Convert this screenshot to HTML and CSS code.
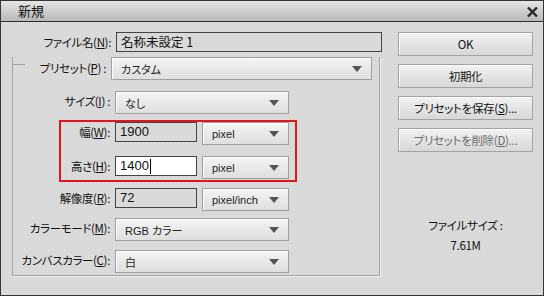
FILE: index.html
```html
<!DOCTYPE html>
<html lang="ja">
<head>
<meta charset="utf-8">
<title>新規</title>
<link rel="stylesheet" href="styles.css">
</head>
<body>
<div class="window">
  <div class="titlebar">
    <span class="title">新規</span>
    <svg class="close" width="11" height="10" viewBox="0 0 11 10"><path d="M1 0.5 L10 9.5 M10 0.5 L1 9.5" stroke="#2a2a2a" stroke-width="2.4"/></svg>
  </div>
  <div class="body">
    <div class="left">
      <div class="row file-row">
        <label class="lbl lbl-file">ファイル名(<u>N</u>):</label>
        <div class="field ro name">名称未設定 1</div>
      </div>
      <div class="group">
        <div class="preset-row">
          <span class="corner"></span>
          <label class="lbl lbl-preset">プリセット(<u>P</u>) :</label>
          <div class="select preset"><span class="val">カスタム</span><span class="arrow"></span></div>
        </div>
        <div class="row size-row">
          <label class="lbl">サイズ(<u>I</u>) :</label>
          <div class="select wide"><span class="val">なし</span><span class="arrow"></span></div>
        </div>
        <div class="highlight">
          <div class="row">
            <label class="lbl lbl-in">幅(<u>W</u>):</label>
            <div class="field ro num">1900</div>
            <div class="select unit"><span class="val">pixel</span><span class="arrow"></span></div>
          </div>
          <div class="row row-h">
            <label class="lbl lbl-in">高さ(<u>H</u>):</label>
            <div class="field edit num">1400<span class="caret"></span></div>
            <div class="select unit"><span class="val">pixel</span><span class="arrow"></span></div>
          </div>
        </div>
        <div class="row res-row">
          <label class="lbl">解像度(<u>R</u>):</label>
          <div class="field ro num">72</div>
          <div class="select unit"><span class="val">pixel/inch</span><span class="arrow"></span></div>
        </div>
        <div class="row mode-row">
          <label class="lbl">カラーモード(<u>M</u>):</label>
          <div class="select wide"><span class="val">RGB カラー</span><span class="arrow"></span></div>
        </div>
        <div class="row canvas-row">
          <label class="lbl">カンバスカラー(<u>C</u>):</label>
          <div class="select wide"><span class="val">白</span><span class="arrow"></span></div>
        </div>
      </div>
    </div>
    <div class="right">
      <div class="btn">OK</div>
      <div class="btn">初期化</div>
      <div class="btn">プリセットを保存(<u>S</u>)...</div>
      <div class="btn disabled">プリセットを削除(<u>D</u>)...</div>
      <div class="info">
        <div>ファイルサイズ :</div>
        <div>7.61M</div>
      </div>
    </div>
  </div>
</div>
</body>
</html>
```

FILE: styles.css
```css
* { box-sizing: border-box; }
html, body { margin: 0; padding: 0; }
body {
  width: 544px;
  height: 296px;
  font-family: "Noto Sans CJK JP", "Liberation Sans", sans-serif;
  font-feature-settings: "palt";
  font-size: 12px;
  color: #111;
}
u { text-decoration: underline; text-underline-offset: 1px; }

.window {
  width: 544px;
  height: 296px;
  border: 1px solid #353535;
  background-color: #d8d8d8;
  background-image:
    radial-gradient(circle, #e3e3e3 0.5px, transparent 0.8px),
    radial-gradient(circle, #e3e3e3 0.5px, transparent 0.8px);
  background-size: 4px 4px, 4px 4px;
  background-position: 0 0, 2px 2px;
  display: flex;
  flex-direction: column;
}

.titlebar {
  height: 21px;
  border-bottom: 1px solid #2e2e2e;
  background: linear-gradient(#e6e6e6, #c9c9c9 60%, #b9b9b9);
  display: flex;
  align-items: center;
  padding: 0 5px 0 17px;
}
.title { font-size: 13px; line-height: 20px; color: #111; }
.close { margin-left: auto; margin-top: 2px; }

.body {
  flex: 1;
  display: flex;
  padding: 10px 10px 0 0;
}
.left { width: 382px; }
.right {
  margin-left: 15px;
  width: 135px;
  display: flex;
  flex-direction: column;
  gap: 8px;
}

.row { display: flex; align-items: flex-start; }
.lbl {
  text-align: right;
  white-space: nowrap;
  line-height: 20px;
  margin-right: 5px;
  color: #111;
  font-size: 11.5px;
  letter-spacing: -0.35px;
}
.lbl-file { width: 110px; }

.field {
  height: 20px;
  border: 1px solid #444;
  line-height: 18px;
  padding-left: 4px;
  font-size: 13px;
  font-family: "Liberation Sans", "Noto Sans CJK JP", sans-serif;
  white-space: nowrap;
}
.field.name { width: 266px; font-family: "Noto Sans CJK JP", sans-serif; font-size: 12.5px; }
.field.num { width: 82px; }
.field.edit { background: #fff; display: flex; align-items: center; }
.caret { width: 1px; height: 15px; background: #000; margin-left: 1px; }

.group {
  margin: 12px 0 0 11px;
  width: 368px;
  height: 219px;
  border: 1px solid #a3a3a3;
  border-top: none;
  box-shadow: 1px 1px 0 #efefef;
}
.preset-row {
  display: flex;
  align-items: flex-start;
  margin-top: -7px;
}
.corner {
  width: 13px;
  height: 1px;
  margin: 7px 0 0 -1px;
  background: #a3a3a3;
}
.lbl-preset { width: 81px; line-height: 22px; margin-right: 5px; }

.select {
  height: 23px;
  border: 1px solid #a0a0a0;
  background: linear-gradient(#f5f5f5, #e9e9e9 50%, #dfdfdf);
  box-shadow: inset 1px 1px 0 #fbfbfb;
  display: flex;
  align-items: center;
  padding-left: 9px;
  font-size: 11px;
  color: #222;
  white-space: nowrap;
}
.select .val { font-family: "Liberation Sans", "Noto Sans CJK JP", sans-serif; }
.select .arrow {
  margin-left: auto;
  margin-right: 9px;
  width: 0;
  height: 0;
  border-left: 5px solid transparent;
  border-right: 5px solid transparent;
  border-top: 6px solid #555;
}
.select.preset { width: 261px; }
.select.wide { width: 174px; }
.select.unit { width: 87px; margin-left: 5px; }

.group > .row .lbl { width: 97px; }
.size-row { margin-top: 11px; }

.highlight {
  margin: 6px 0 0 46px;
  width: 238px;
  border: 2px solid #e4141b;
  padding: 0 0 1px 0;
}
.highlight .lbl-in { width: 49px; }
.row-h { margin-top: 11px; }

.res-row { margin-top: 6px; }
.mode-row { margin-top: 7px; }
.canvas-row { margin-top: 9px; }

.btn {
  height: 24px;
  border: 1px solid #a3a3a3;
  background: linear-gradient(#f3f3f3, #e4e4e4 50%, #d8d8d8);
  box-shadow: inset 1px 1px 0 #fafafa;
  display: flex;
  align-items: center;
  justify-content: center;
  font-size: 11.5px;
  letter-spacing: -0.3px;
  color: #111;
  white-space: nowrap;
}
.btn.disabled { color: #6c6c6c; }

.info {
  margin-top: 55px;
  text-align: center;
  line-height: 20px;
  font-size: 11.5px;
  letter-spacing: -0.3px;
}
```
